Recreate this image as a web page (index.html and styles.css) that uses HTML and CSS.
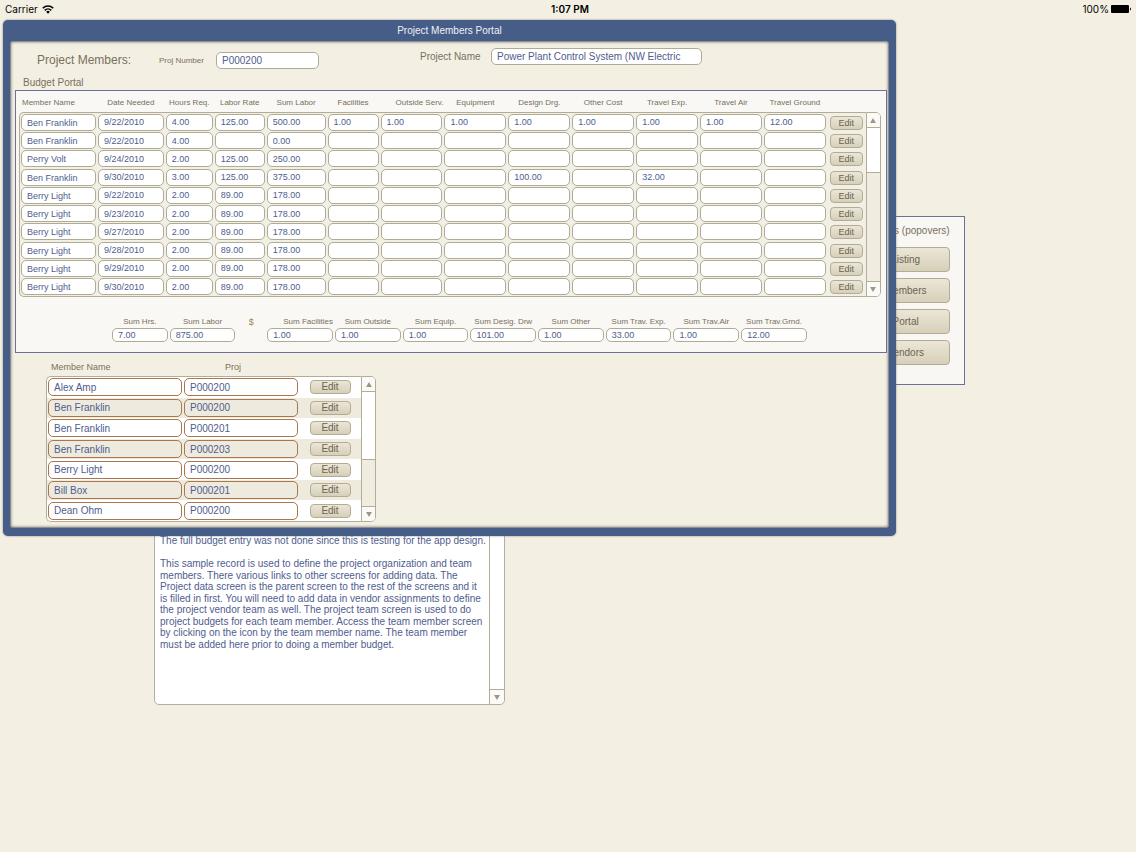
FILE: index.html
```html
<!DOCTYPE html>
<html lang="en">
<head>
  <meta charset="utf-8">
  <title>Project Members Portal</title>
  <link rel="stylesheet" href="styles.css">
</head>
<body>
  <header class="status-bar">
    <div class="carrier">
      <span>Carrier</span>
      <svg width="12" height="9" viewBox="0 0 24 18">
        <path d="M1.5 6.5a15 15 0 0 1 21 0" fill="none" stroke="#000" stroke-width="3"/>
        <path d="M5.5 10.7a9.2 9.2 0 0 1 13 0" fill="none" stroke="#000" stroke-width="3"/>
        <path d="M8.3 13.6a5.2 5.2 0 0 1 7.4 0L12 17.5z" fill="#000"/>
      </svg>
    </div>
    <div class="clock">1:07 PM</div>
    <div class="battery">
      <span>100%</span>
      <svg width="20" height="8" viewBox="0 0 20 8">
        <rect x="0" y="0" width="18" height="8" rx="1"/>
        <path d="M19 2.5q1 .5 1 1.5t-1 1.5z"/>
      </svg>
    </div>
  </header>

  <main>
    <!-- project record behind the popover -->
    <section class="links">
      <h2>Links (popovers)</h2>
      <button type="button">Listing</button>
      <button type="button">Members</button>
      <button type="button">Portal</button>
      <button type="button">Vendors</button>
    </section>

    <div class="notes">
      <textarea aria-label="Notes">The full budget entry was not done since this is testing for the app design.

This sample record is used to define the project organization and team
members. There various links to other screens for adding data. The
Project data screen is the parent screen to the rest of the screens and it
is filled in first. You will need to add data in vendor assignments to define
the project vendor team as well. The project team screen is used to do
project budgets for each team member. Access the team member screen
by clicking on the icon by the team member name. The team member
must be added here prior to doing a member budget.</textarea>
      <div class="scroll">
        <div class="track"></div>
        <button type="button" aria-label="Scroll down"><svg width="6" height="5" viewBox="0 0 7 6"><path d="M0 0h7L3.5 6z"/></svg></button>
      </div>
    </div>

    <section class="popover">
      <h1>Project Members Portal</h1>
      <div class="popover-body">
        <div class="project">
          <h2>Project Members:</h2>
          <label class="small" for="projNumber">Proj Number</label>
          <input type="text" id="projNumber" class="number" value="P000200">
          <div class="project-name">
            <label for="projName">Project Name</label>
            <input type="text" id="projName" value="Power Plant Control System (NW Electric">
          </div>
        </div>

        <h3>Budget Portal</h3>
        <div class="budget">
          <div class="portal">
            <table id="budgetTable" class="budget-table">
              <colgroup>
                <col class="w-name"><col class="w-date"><col class="w-hours"><col class="w-rate">
                <col class="w-labor"><col class="w-facilities"><col span="7" class="w-cost"><col class="w-edit">
              </colgroup>
              <thead>
                <tr>
                  <th class="left">Member Name</th>
                  <th>Date Needed</th>
                  <th>Hours Req.</th>
                  <th>Labor Rate</th>
                  <th>Sum Labor</th>
                  <th>Facilities</th>
                  <th class="right">Outside Serv.</th>
                  <th>Equipment</th>
                  <th>Design Drg.</th>
                  <th>Other Cost</th>
                  <th>Travel Exp.</th>
                  <th>Travel Air</th>
                  <th>Travel Ground</th>
                  <th></th>
                </tr>
              </thead>
              <tbody></tbody>
            </table>
            <div class="scroll">
              <button type="button" aria-label="Scroll up"><svg width="6" height="5" viewBox="0 0 7 6"><path d="M0 6h7L3.5 0z"/></svg></button>
              <div class="track"><div class="thumb short"></div></div>
              <button type="button" aria-label="Scroll down"><svg width="6" height="5" viewBox="0 0 7 6"><path d="M0 0h7L3.5 6z"/></svg></button>
            </div>
          </div>

          <div class="sums">
            <div><label for="sumHrs">Sum Hrs.</label><input type="text" id="sumHrs" value="7.00"></div>
            <div><label for="sumLabor">Sum Labor</label><input type="text" id="sumLabor" value="875.00"></div>
            <div class="dollar">$</div>
            <div class="right"><label for="sumFac">Sum Facilities</label><input type="text" id="sumFac" value="1.00"></div>
            <div><label for="sumOut">Sum Outside</label><input type="text" id="sumOut" value="1.00"></div>
            <div><label for="sumEquip">Sum Equip.</label><input type="text" id="sumEquip" value="1.00"></div>
            <div><label for="sumDesig">Sum Desig. Drw</label><input type="text" id="sumDesig" value="101.00"></div>
            <div><label for="sumOther">Sum Other</label><input type="text" id="sumOther" value="1.00"></div>
            <div><label for="sumExp">Sum Trav. Exp.</label><input type="text" id="sumExp" value="33.00"></div>
            <div><label for="sumAir">Sum Trav.Air</label><input type="text" id="sumAir" value="1.00"></div>
            <div><label for="sumGrnd">Sum Trav.Grnd.</label><input type="text" id="sumGrnd" value="12.00"></div>
          </div>
        </div>

        <div class="portal members">
          <table id="memberTable" class="member-table">
            <colgroup><col class="m-name"><col class="m-proj"><col class="m-edit"></colgroup>
            <thead>
              <tr>
                <th class="left">Member Name</th>
                <th class="proj">Proj</th>
                <th></th>
              </tr>
            </thead>
            <tbody></tbody>
          </table>
          <div class="scroll">
            <button type="button" aria-label="Scroll up"><svg width="6" height="5" viewBox="0 0 7 6"><path d="M0 6h7L3.5 0z"/></svg></button>
            <div class="track"><div class="thumb"></div></div>
            <button type="button" aria-label="Scroll down"><svg width="6" height="5" viewBox="0 0 7 6"><path d="M0 0h7L3.5 6z"/></svg></button>
          </div>
        </div>
      </div>
    </section>
  </main>

  <script src="script.js"></script>
</body>
</html>
```

FILE: styles.css
```css
* {
  box-sizing: border-box;
}

body {
  margin: 0;
  min-height: 100vh;
  background-color: #f4efe3;
  color: #786f60;
  font-family: "Liberation Sans", Arial, sans-serif;
  font-size: 10px;
  line-height: 12px;
}

h1,
h2,
h3 {
  margin: 0;
  font-size: 10px;
  font-weight: normal;
}

input,
button,
textarea {
  margin: 0;
  font-family: inherit;
  font-size: 10px;
}

input {
  display: block;
  width: 100%;
  min-width: 0;
  height: 17px;
  padding: 0 5px;
  border: 1px solid #b0ab95;
  border-radius: 5px;
  background-color: #fff;
  color: #4f5d8e;
}

button {
  padding: 0;
  border: 1px solid #b3ab94;
  border-radius: 4px;
  background: linear-gradient(#ebe6d6, #d6d0ba);
  color: #6c6350;
}

main {
  position: relative;
}

/* status bar */
.status-bar {
  display: grid;
  grid-template-columns: 1fr auto 1fr;
  align-items: center;
  height: 18px;
  padding: 0 5px;
  background-color: #f3f0e3;
  color: #000;
  font-family: Inter, sans-serif;
  font-size: 10px;
}

.carrier,
.battery {
  display: flex;
  align-items: center;
  gap: 4px;
}

.battery {
  justify-content: flex-end;
  gap: 2px;
}

.clock {
  padding-left: 4px;
  font-weight: 600;
}

/* record behind the popover */
.links {
  display: flex;
  flex-direction: column;
  gap: 6px;
  width: 124px;
  margin-left: 74%;
  padding: 8px 14px 19px;
  border: 1px solid #6b7198;
  background-color: #f8f7f3;
}

main::before {
  content: "";
  display: block;
  height: 198px;
}

.links h2 {
  align-self: flex-end;
  margin-bottom: 4px;
  white-space: nowrap;
}

.links button {
  height: 25px;
  align-self: flex-end;
  width: 88px;
}

.notes {
  display: flex;
  width: 351px;
  height: 175px;
  margin: 145px 0 0 154px;
  border: 1px solid #b1aea2;
  border-radius: 5px;
  background-color: #fff;
  overflow: hidden;
}

.notes textarea {
  flex: 1;
  padding: 4px 0 4px 5px;
  border: 0;
  background: none;
  color: #4f5d8e;
  line-height: 1.15;
  resize: none;
  overflow: hidden;
}

/* popover */
.popover {
  position: absolute;
  top: 2px;
  left: 3px;
  width: 78.6%;
  padding: 0 7px 8px;
  border-radius: 5px;
  background-color: #465d88;
  box-shadow: 0 0 2px #777;
}

.popover h1 {
  color: #f0f1f4;
  line-height: 21px;
  text-align: center;
}

.popover-body {
  padding: 6px 1px 5px 4px;
  border: 1px solid #8b8f92;
  border-radius: 3px;
  background-color: #f4efe3;
  box-shadow: inset 0 0 3px #77776f;
}

.project {
  display: flex;
  align-items: flex-end;
  height: 21px;
  padding-left: 22px;
}

.project h2 {
  width: 122px;
  font-size: 12px;
  line-height: 17px;
}

.project .small {
  width: 57px;
  font-size: 8px;
  line-height: 17px;
}

.project .number {
  width: 103px;
}

.project-name {
  display: flex;
  align-self: flex-start;
  margin-left: 101px;
  line-height: 17px;
}

.project-name label {
  width: 71px;
}

.project-name input {
  width: 211px;
}

.popover h3 {
  padding: 8px 0 1px 8px;
}

.budget {
  padding: 0 5px 10px 3px;
  border: 1px solid #6b7198;
  background-color: #f9f8f4;
}

/* portals: a table with its own scroll bar */
.portal {
  display: flex;
}

.portal table {
  flex: 1;
  table-layout: fixed;
  border-spacing: 0;
}

th {
  padding: 2px 0 0;
  font-size: 8px;
  font-weight: normal;
  white-space: nowrap;
}

th.left {
  padding-left: 3px;
  text-align: left;
}

th.right {
  text-align: right;
}

td {
  padding: 0 1px;
}

tbody tr:first-child td {
  border-top: 1px solid #b3ad98;
}

tbody tr:last-child td {
  border-bottom: 1px solid #b3ad98;
}

tbody td:first-child {
  border-left: 1px solid #b3ad98;
}

tbody tr:first-child td:first-child {
  border-top-left-radius: 5px;
}

tbody tr:last-child td:first-child {
  border-bottom-left-radius: 5px;
}

.scroll {
  display: flex;
  flex-direction: column;
  width: 15px;
  border: 1px solid #b3ad98;
  border-radius: 0 5px 5px 0;
  background-color: #fff;
  overflow: hidden;
}

.scroll button {
  display: flex;
  align-items: center;
  justify-content: center;
  height: 14px;
  border: 0;
  border-radius: 0;
  background: #fbfaf7;
}

.scroll svg {
  fill: #99968c;
}

.track {
  flex: 1;
  border: solid #b3ad98;
  border-width: 1px 0;
  background-color: #f1ece0;
}

.thumb {
  height: 68px;
  border-bottom: 1px solid #b3ad98;
  background-color: #fff;
}

.thumb.short {
  height: 45px;
}

.notes .scroll {
  border-width: 0 0 0 1px;
}

.notes .track {
  border-top: 0;
  background-color: #fff;
}

.budget-table {
  height: 206px;
}

.budget-table thead tr {
  height: 21px;
}

.budget-table tbody {
  background-color: #f2efe4;
}

.budget-table input {
  height: 17px;
  font-size: 9px;
}

.budget-table td:first-child input {
  padding-top: 1px;
}

.budget-table button {
  display: block;
  width: 33px;
  height: 14px;
  margin: 1px auto 0;
  font-size: 9px;
  line-height: 12px;
}

.budget .scroll {
  margin-top: 21px;
}

.w-name { width: 78px; }
.w-date { width: 68px; }
.w-hours { width: 49px; }
.w-rate { width: 52px; }
.w-labor { width: 61px; }
.w-facilities { width: 53px; }
.w-cost { width: 64px; }
.w-edit { width: 39px; }

.sums {
  display: grid;
  grid-template-columns: 56fr 66fr 28fr repeat(8, 66fr);
  gap: 2px;
  margin: 19px 74px 0 93px;
  font-size: 8px;
  text-align: center;
  white-space: nowrap;
}

.sums label {
  display: block;
}

.sums .right {
  text-align: right;
}

.sums .dollar {
  color: #a5844f;
  font-size: 9px;
}

.sums input {
  height: 14px;
  font-size: 9px;
}

/* member list */
.members {
  width: 330px;
  margin: 5px 0 0 31px;
}

.member-table {
  height: 164px;
}

.member-table thead tr {
  height: 18px;
}

.member-table th {
  padding-top: 0;
  font-size: 9px;
  line-height: 18px;
}

.member-table th.left {
  padding-left: 5px;
}

.member-table th.proj {
  padding-right: 16px;
}

.member-table tbody tr {
  background-color: #fff;
}

.member-table tbody tr:nth-child(even) {
  background-color: #eeeade;
}

.member-table input {
  height: 18px;
  border-color: #a9774f;
  background-color: transparent;
}

.member-table button {
  display: block;
  width: 41px;
  height: 14px;
  margin: 0 auto;
  font-size: 10px;
  line-height: 12px;
}

.members .scroll {
  margin-top: 18px;
}

.m-name { width: 137px; }
.m-proj { width: 116px; }
.m-edit { width: 62px; }
```

FILE: script.js
```js
var budget = [
  ["Ben Franklin", "9/22/2010", "4.00", "125.00", "500.00", "1.00", "1.00", "1.00", "1.00", "1.00", "1.00", "1.00", "12.00"],
  ["Ben Franklin", "9/22/2010", "4.00", "", "0.00", "", "", "", "", "", "", "", ""],
  ["Perry Volt", "9/24/2010", "2.00", "125.00", "250.00", "", "", "", "", "", "", "", ""],
  ["Ben Franklin", "9/30/2010", "3.00", "125.00", "375.00", "", "", "", "100.00", "", "32.00", "", ""],
  ["Berry Light", "9/22/2010", "2.00", "89.00", "178.00", "", "", "", "", "", "", "", ""],
  ["Berry Light", "9/23/2010", "2.00", "89.00", "178.00", "", "", "", "", "", "", "", ""],
  ["Berry Light", "9/27/2010", "2.00", "89.00", "178.00", "", "", "", "", "", "", "", ""],
  ["Berry Light", "9/28/2010", "2.00", "89.00", "178.00", "", "", "", "", "", "", "", ""],
  ["Berry Light", "9/29/2010", "2.00", "89.00", "178.00", "", "", "", "", "", "", "", ""],
  ["Berry Light", "9/30/2010", "2.00", "89.00", "178.00", "", "", "", "", "", "", "", ""]
];

var members = [
  ["Alex Amp", "P000200"],
  ["Ben Franklin", "P000200"],
  ["Ben Franklin", "P000201"],
  ["Ben Franklin", "P000203"],
  ["Berry Light", "P000200"],
  ["Bill Box", "P000201"],
  ["Dean Ohm", "P000200"]
];

function fillTable(id, rows) {
  var table = document.getElementById(id);
  var heads = table.querySelectorAll("th");
  var html = "";
  rows.forEach(function (row) {
    html += "<tr>";
    row.forEach(function (value, i) {
      html += "<td><input type='text' aria-label='" + heads[i].textContent + "' value='" + value + "'></td>";
    });
    html += "<td><button type='button'>Edit</button></td></tr>";
  });
  table.tBodies[0].innerHTML = html;
}

fillTable("budgetTable", budget);
fillTable("memberTable", members);
```
